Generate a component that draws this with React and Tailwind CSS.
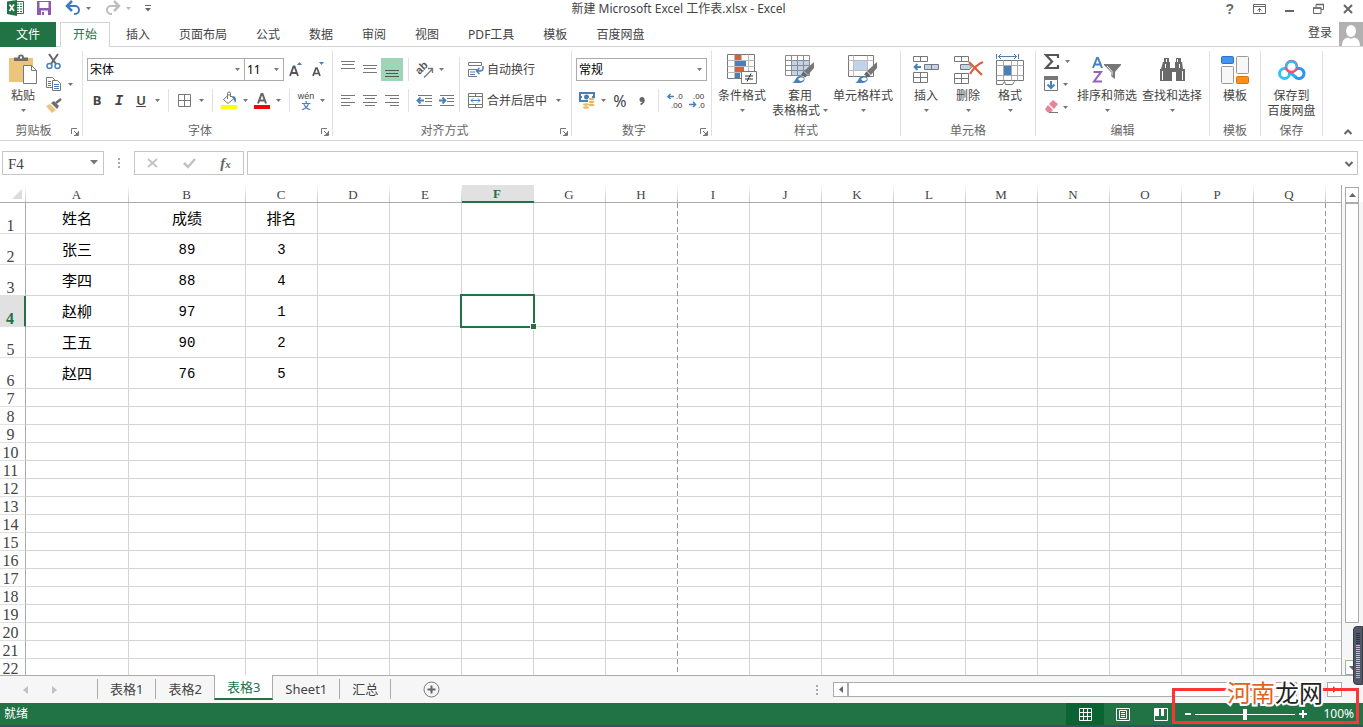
import { useState } from "react";

const COLUMNS = "ABCDEFGHIJKLMNOPQ".split("");

const DATA = [
  ["姓名", "成绩", "排名"],
  ["张三", "89", "3"],
  ["李四", "88", "4"],
  ["赵柳", "97", "1"],
  ["王五", "90", "2"],
  ["赵四", "76", "5"],
];

const ROWS = Array.from({ length: 22 }, (_, i) => i + 1);

const MENU = ["开始", "插入", "页面布局", "公式", "数据", "审阅", "视图", "PDF工具", "模板", "百度网盘"];

const SHEETS = ["表格1", "表格2", "表格3", "Sheet1", "汇总"];

/* ---------- helpers ---------- */

const Svg = ({ w, h, children, className = "" }) => (
  <svg
    width={w}
    height={h}
    viewBox={`0 0 ${w} ${h}`}
    fill="none"
    className={`shrink-0 overflow-visible ${className}`}
    aria-hidden="true"
  >
    {children}
  </svg>
);

const Caret = ({ color = "#777" }) => (
  <Svg w={5} h={3}>
    <path d="M0 0h5L2.500 3z" fill={color} />
  </Svg>
);

const DropButton = ({ label }) => (
  <button aria-label={label} className="flex h-full w-[11px] items-center justify-center">
    <Caret />
  </button>
);

const Tool = ({ label, active, children }) => (
  <button
    aria-label={label}
    className={`flex h-full w-[22px] shrink-0 items-center justify-center ${active ? "bg-[#9fd5b7]" : ""}`}
  >
    {children}
  </button>
);

const Sep = () => (
  <div className="flex h-full w-[11px] justify-center">
    <div className="w-px bg-[#e1e1e1]" />
  </div>
);

const Group = ({ title, launcher, width, children }) => (
  <section className={`flex h-[85px] shrink-0 flex-col border-r border-[#e1e1e1] ${width}`}>
    <div className="flex h-[73px]">{children}</div>
    <div className="flex h-3 items-center leading-[14px] text-[#666]">
      <span className={`flex-1 pt-[2px] text-center ${launcher ? "pr-1" : ""}`}>{title}</span>
      {launcher && (
        <button aria-label={`${title}设置`} className="mr-[3px] pt-1">
          <Svg w={8} h={8}>
            <path d="M.5 6V.5H6M3 3l3 3M7.500 3v4.500H3" stroke="#777" />
            <path d="M7 4v3H4z" fill="#777" />
          </Svg>
        </button>
      )}
    </div>
  </section>
);

const BigButton = ({ icon, lines, width, drop = true }) => (
  <button className={`flex h-full shrink-0 flex-col items-center ${width}`}>
    <span className="flex h-[37px] items-center justify-center">{icon}</span>
    <span className="h-[15px] leading-[15px] whitespace-nowrap">{lines[0]}</span>
    <span className="flex h-[15px] items-center gap-[3px] leading-[15px] whitespace-nowrap">
      {lines[1]}
      {drop && <Caret />}
    </span>
  </button>
);

const Combo = ({ label, value, width }) => (
  <div className={`relative h-[23px] ${width}`}>
    <select
      aria-label={label}
      defaultValue={value}
      className="h-full w-full appearance-none border border-[#ababab] bg-white px-[2px] text-xs text-black outline-none"
    >
      <option>{value}</option>
    </select>
    <span className="pointer-events-none absolute top-[10px] right-[5px]">
      <Caret />
    </span>
  </div>
);

/* ---------- icons ---------- */

const ExcelLogo = () => (
  <Svg w={17} h={16}>
    <path d="M9 1.500h7.500v12H9z" fill="#fff" stroke="#217346" />
    <path d="M10 4h5M10 6.500h5M10 9h5M10 11.500h5" stroke="#217346" />
    <path d="M12.500 3v10" stroke="#fff" />
    <path d="M0 1.500 10 0v16L0 14z" fill="#217346" />
    <path d="M2.500 4.500 7 11M7 4.500 2.500 11" stroke="#fff" strokeWidth="1.700" />
  </Svg>
);

const SaveIcon = () => (
  <Svg w={14} h={14}>
    <path d="M0 0h14v14H0z" fill="#8d5aae" />
    <path d="M2.500 1h9v6h-9zM4 9.500h7V14H4z" fill="#fff" />
    <path d="M5 11h2v3H5z" fill="#8d5aae" />
  </Svg>
);

const UndoIcon = ({ color, flip }) => (
  <Svg w={15} h={14} className={flip ? "-scale-x-100" : ""}>
    <path d="M2 5h7a4 4 0 0 1 0 8H8" stroke={color} strokeWidth="2" />
    <path d="M6 0 1 5l5 5" stroke={color} strokeWidth="2.500" />
  </Svg>
);

const PasteIcon = () => (
  <Svg w={28} h={31}>
    <path d="M0 4h24v24H0z" fill="#ecc57c" />
    <path d="M5 7V3.500h4a3 3 0 0 1 6 0h4V7z" fill="#6d6d6d" />
    <path d="M11 2.500h2v2h-2z" fill="#fff" />
    <path d="M14.500 11.500h8l5 5v13h-13z" fill="#fff" stroke="#777" />
    <path d="M22.500 11.500v5h5" stroke="#777" />
  </Svg>
);

const CutIcon = () => (
  <Svg w={15} h={16}>
    <path d="M3 0l7 10M12 0 5 10" stroke="#666" strokeWidth="2" />
    <circle cx="3.500" cy="12" r="2.500" stroke="#4a80ba" strokeWidth="1.500" />
    <circle cx="11.500" cy="12" r="2.500" stroke="#4a80ba" strokeWidth="1.500" />
  </Svg>
);

const CopyIcon = () => (
  <Svg w={16} h={14}>
    <path d="M.5.500h6l2 2v8h-8z" fill="#fff" stroke="#777" />
    <path d="M2 4.500h3M2 6.500h3M2 8.500h3" stroke="#4a80ba" />
    <path d="M6.500 3.500h5l3 3v7h-8z" fill="#fff" stroke="#777" />
    <path d="M8 7.500h5M8 9.500h5M8 11.500h5" stroke="#4a80ba" />
  </Svg>
);

const FormatPainterIcon = () => (
  <Svg w={16} h={14}>
    <path d="m0 7 4-2 6 6-4 3z" fill="#ecc57c" />
    <path d="m5 4 3-2 5 5-2 3z" fill="#6d6d6d" />
    <path d="m10 4 5-4" stroke="#6d6d6d" strokeWidth="2.500" />
  </Svg>
);

const BordersIcon = () => (
  <Svg w={14} h={13}>
    <path d="M.5.500h12v12H.5zM6.500.500v12M.5 6.500h12" stroke="#777" />
  </Svg>
);

const FillIcon = () => (
  <Svg w={16} h={17}>
    <path d="M2.500 7.500 8 2.500l5 4-6 5z" fill="#fff" stroke="#777" />
    <path d="M6.500 7V1.500a1.500 1.500 0 0 1 3 0V5" stroke="#777" />
    <path d="M11 4c3 0 4.500 2 4 5l-1 2c-1-3-1-4-3-7z" fill="#4a80ba" />
    <path d="M0 13h16v4H0z" fill="#ff0" />
  </Svg>
);

const FontColorIcon = () => (
  <Svg w={16} h={17}>
    <path d="M4 11.500 7.500 2h1L12 11.500M5 8.500h6" stroke="#666" strokeWidth="2" />
    <path d="M0 13h16v4H0z" fill="#f00" />
  </Svg>
);

const Lines = ({ d, color = "#777" }) => (
  <Svg w={14} h={17}>
    <path d={d} stroke={color} />
  </Svg>
);

const OrientationIcon = () => (
  <Svg w={16} h={16}>
    <g transform="rotate(-45 6 8)">
      <text
        x="0"
        y="9"
        fontSize="11"
        fill="#555"
        className="font-['Liberation_Sans',sans-serif] font-bold"
      >
        ab
      </text>
    </g>
    <path d="M7 15.500 15 7.500M11 6.500h4.500V11" stroke="#777" strokeWidth="1.300" />
  </Svg>
);

const IndentIcon = ({ right }) => (
  <Svg w={16} h={11}>
    <path d="M1 .5h14M8 3.500h7M8 6.500h7M1 10.500h14" stroke="#777" />
    {right ? (
      <path d="M0 5.500h6M3.500 2.500l3 3-3 3" stroke="#4a80ba" strokeWidth="1.800" />
    ) : (
      <path d="M1 5.500h6M3.500 2.500l-3 3 3 3" stroke="#4a80ba" strokeWidth="1.800" />
    )}
  </Svg>
);

const WrapIcon = () => (
  <Svg w={16} h={15}>
    <path d="M.5.500h13v3H.5zM9 7.500H.5v7H9" stroke="#777" />
    <path d="M2 10h5M2 12.500h5" stroke="#4a80ba" />
    <path d="M15 4v2.500c0 2-1 2.500-6 2.500M11.500 6l-3 3 3 3" stroke="#4a80ba" strokeWidth="1.500" />
  </Svg>
);

const MergeIcon = () => (
  <Svg w={16} h={15}>
    <path d="M.5.500h14v14H.5zM.5 3.500h14M.5 11.500h14M7.500.500v3M7.500 11.500v3" stroke="#777" />
    <path d="M3 7.500h9M5 5.500l-2 2 2 2M10 5.500l2 2-2 2" stroke="#4a80ba" />
  </Svg>
);

const CurrencyIcon = () => (
  <Svg w={16} h={17}>
    <path d="M1 1h14v8H1z" fill="#fff" stroke="#4a80ba" strokeWidth="2" />
    <circle cx="7.500" cy="5" r="2.500" fill="#4a80ba" />
    <path d="M1 5h2M13 5h2" stroke="#4a80ba" strokeWidth="2" />
    <path d="M9 6h7v8H9z" fill="#fff" />
    <ellipse cx="12.500" cy="7" rx="3" ry="1.300" fill="#e8b864" />
    <ellipse cx="12.500" cy="10" rx="3" ry="1.300" fill="#e8b864" />
    <ellipse cx="12.500" cy="13" rx="3" ry="1.300" fill="#e8b864" />
    <ellipse cx="7" cy="12.500" rx="3" ry="1.300" fill="#e8b864" />
    <ellipse cx="7" cy="15.500" rx="3" ry="1.300" fill="#e8b864" />
  </Svg>
);

const DecimalIcon = ({ less }) => (
  <Svg w={16} h={15} className="font-['Liberation_Sans',sans-serif]">
    <text x={less ? 4 : 9} y="6" fontSize="8" fill="#333">
      {less ? ".00" : ".0"}
    </text>
    <text x={less ? 9 : 4} y="15" fontSize="8" fill="#333">
      {less ? ".0" : ".00"}
    </text>
    {less ? (
      <path d="M0 11.500h6M4 9l2.500 2.500L4 14" stroke="#4a80ba" strokeWidth="1.500" />
    ) : (
      <path d="M1 3.500h6M3.500 1 1 3.500 3.500 6" stroke="#4a80ba" strokeWidth="1.500" />
    )}
  </Svg>
);

const Brush = () => (
  <g transform="translate(7 7)">
    <path d="M22 0v6l-6 7-4-4z" fill="#777" />
    <path d="m11.500 9.500 4 4-2.500 2-4-3z" fill="#666" />
    <path d="M0 21c4-1 3-8 9-7 6 1 4 7-2 7z" fill="#4a80ba" />
    <path d="M6 17c2-2 5-2 6 0-1 2-3 2-4 2z" fill="#fff" />
  </g>
);

const ConditionalIcon = () => (
  <Svg w={30} h={31}>
    <path d="M.5.500h27v24H.5z" fill="#fff" stroke="#777" />
    <path d="M.5 6.500h27M.5 12.500h27M.5 18.500h27M7.500.500v24M14.500.500v24M21.500.500v24" stroke="#bbb" />
    <path d="M8 1h6v5H8zM8 13h9v5H8z" fill="#dc5f3d" />
    <path d="M8 7h11v5H8zM8 19h5v5H8z" fill="#4a80ba" />
    <path d="M14.500 17.500h15v12h-15z" fill="#fff" stroke="#777" />
    <path d="M18 22h8M18 25h8M24 19.500l-4 8" stroke="#333" />
  </Svg>
);

const TableFormatIcon = () => (
  <Svg w={30} h={29}>
    <path d="M.5.500h24v20H.5z" fill="#fff" />
    <path d="M7 6h17v14H7z" fill="#c0d3ea" />
    <path d="M.5.500h24v20H.5zM.5 5.500h24M.5 10.500h24M.5 15.500h24M6.500.500v20M12.500.500v20M18.500.500v20" stroke="#8b8b8b" />
    <Brush />
  </Svg>
);

const CellStyleIcon = () => (
  <Svg w={30} h={29}>
    <path d="M.5.500h25v21H.5z" fill="#fff" stroke="#777" />
    <path d="M.5 5.500h25M.5 15.500h25M5.500.500v21M19.500.500v21" stroke="#bbb" />
    <path d="M6 6h13v9H6z" fill="#c0d3ea" />
    <Brush />
  </Svg>
);

const InsertIcon = () => (
  <Svg w={26} h={28}>
    <path d="M.5.500h14v5H.5zM7.500.500v5M.5 16.500h14v10H.5zM7.500 16.500v10M.5 21.500h14" stroke="#777" />
    <path d="M11.500 8.500h14v5h-14z" fill="#c0d3ea" stroke="#777" />
    <path d="M18.500 8.500v5" stroke="#777" />
    <path d="M2 11h6M4.500 8 1.500 11l3 3" stroke="#4a80ba" strokeWidth="1.800" />
  </Svg>
);

const DeleteIcon = () => (
  <Svg w={28} h={28}>
    <path d="M.5.500h14v5H.5zM7.500.500v5M.5 17.500h14v10H.5zM7.500 17.500v10M.5 22.500h14" stroke="#777" />
    <path d="M6.500 8.500h9l2 2.500-2 2.500h-9z" fill="#c0d3ea" stroke="#777" />
    <path d="m15 6 13 13M29 6c-5 2-10 7-13 12" stroke="#dc5f3d" strokeWidth="2.300" />
  </Svg>
);

const FormatIcon = () => (
  <Svg w={28} h={31}>
    <path d="M.5 0v5M22.500 0v5M2 2.500h19M5 0 2.500 2.500 5 5M18 0l2.500 2.500L18 5" stroke="#4a80ba" />
    <path d="M.5 6.500h27v20H.5z" fill="#fff" stroke="#777" />
    <path d="M.5 11.500h27M.5 21.500h27M7.500 6.500v20M15.500 6.500v20M21.500 6.500v20" stroke="#aaa" />
    <path d="M8 12h7v9H8z" fill="#4a80ba" />
    <path d="M.5 27v3.500h6l2-3 1 3h7l2-3" stroke="#777" />
  </Svg>
);

const SumIcon = () => (
  <Svg w={15} h={15}>
    <path d="M14 4V1H2l6 6.500L2 14h12v-3" stroke="#555" strokeWidth="2.200" />
  </Svg>
);

const FillDownIcon = () => (
  <Svg w={15} h={16}>
    <path d="M.5.500h13v14H.5z" fill="#fff" stroke="#777" />
    <path d="M0 0h14v4H0z" fill="#777" />
    <path d="M7 5v7M3.500 8.500 7 12l3.500-3.500" stroke="#4a80ba" strokeWidth="2" />
  </Svg>
);

const EraserIcon = () => (
  <Svg w={15} h={14}>
    <path d="m5 4 4-4 5 4-4 5z" fill="#e98398" />
    <path d="m4 5 5 5-3 3-3-1-2-3z" fill="#e98398" />
    <path d="M5 12.500h9" stroke="#777" />
  </Svg>
);

const SortIcon = () => (
  <Svg w={30} h={28}>
    <path d="m1 12 4-10h1l4 10M2.500 8.500h6" stroke="#4a80ba" strokeWidth="2" />
    <path d="M1.500 16H9l-7 9.500h8" stroke="#9460b8" strokeWidth="2" />
    <path d="M12 8h17v1l-6 7v7l-4-3v-4l-7-7z" fill="#777" />
    <path d="m15 10 5 5.500v4" stroke="#fff" />
  </Svg>
);

const FindIcon = () => (
  <Svg w={26} h={25}>
    <path d="M5 1h5v4h1v6h5V5h1V1h5v4h1l1 7h2v12h-9v-9h-4v9H1V12h1l2-7h1z" fill="#6a6a6a" />
    <path d="M3.500 14v9M7.500 2v3M18.500 2v3M23.500 14v9M6.500 7v4M20.500 7v4" stroke="#fff" />
  </Svg>
);

const TemplateIcon = () => (
  <Svg w={28} h={28}>
    <rect x=".5" y=".5" width="12" height="7" rx="1" fill="#4195ee" stroke="#2b73c9" />
    <rect x="15.500" y=".5" width="12" height="17" rx="1" fill="#f7f7f7" stroke="#999" />
    <rect x=".5" y="10.500" width="12" height="17" rx="1" fill="#f7f7f7" stroke="#999" />
    <rect x="15.500" y="20.500" width="12" height="7" rx="1" fill="#ff8d1c" stroke="#dd7409" />
  </Svg>
);

const BaiduDiskIcon = () => (
  <Svg w={27} h={22}>
    <circle cx="6.500" cy="14.500" r="5" stroke="#2cc5f5" strokeWidth="3" />
    <path d="M17 17.500a5 5 0 1 0 1-7" stroke="#2b94ee" strokeWidth="3" />
    <path d="m9.500 11 8 7" stroke="#2bb0f0" strokeWidth="3" />
    <circle cx="13.500" cy="7.500" r="5.500" fill="#fff" stroke="#f4506c" strokeWidth="2.500" />
    <path d="M8 8a5.500 5.500 0 0 1 11 0" stroke="#36b9f3" strokeWidth="2.500" />
  </Svg>
);

/* ---------- title bar & menu ---------- */

const TitleBar = () => (
  <header className="grid h-[22px] shrink-0 grid-cols-[1fr_auto_1fr] pr-[6px]">
    <div className="flex h-4 items-center pl-[7px]">
      <ExcelLogo />
      <button aria-label="保存" className="ml-[13px]">
        <SaveIcon />
      </button>
      <button aria-label="撤消" className="ml-[15px]">
        <UndoIcon color="#3f7cbf" />
      </button>
      <span className="ml-[5px]">
        <Caret />
      </span>
      <button aria-label="恢复" className="ml-[14px]">
        <UndoIcon color="#bdbdbd" flip />
      </button>
      <span className="ml-[6px]">
        <Caret color="#bbb" />
      </span>
      <button aria-label="自定义快速访问工具栏" className="ml-[14px]">
        <Svg w={6} h={7}>
          <path d="M0 .5h6" stroke="#666" />
          <path d="M0 3h6L3 6.500z" fill="#666" />
        </Svg>
      </button>
    </div>
    <h1 className="leading-[18px] text-[#444]">新建 Microsoft Excel 工作表.xlsx - Excel</h1>
    <div className="flex h-[17px] items-center justify-end gap-[19px] pr-1">
      <button aria-label="帮助" className="font-['Liberation_Sans',sans-serif] text-sm leading-4 font-bold text-[#666]">
        ?
      </button>
      <button aria-label="功能区显示选项">
        <Svg w={13} h={10}>
          <path d="M.5.500h12v9H.5zM.5 2.500h12M6.500 8V4.500M4.500 6.500l2-2 2 2" stroke="#666" />
        </Svg>
      </button>
      <button aria-label="最小化">
        <Svg w={9} h={10}>
          <path d="M0 7h9" stroke="#666" strokeWidth="2" />
        </Svg>
      </button>
      <button aria-label="还原">
        <Svg w={11} h={10}>
          <path d="M3 3V.500h7.500v5H8" stroke="#666" />
          <path d="M.5 4h7.500v5.500H.5z" stroke="#666" />
          <path d="M0 4h8.500M3 .5h8" stroke="#666" strokeWidth="1.500" />
        </Svg>
      </button>
      <button aria-label="关闭">
        <Svg w={10} h={10}>
          <path d="m1 1 8 8M9 1 1 9" stroke="#666" strokeWidth="2" />
        </Svg>
      </button>
    </div>
  </header>
);

const MenuBar = () => (
  <nav className="flex h-[25px] shrink-0 text-[#444] shadow-[inset_0_-1px_0_#d4d4d4]">
    <button className="w-14 bg-[#217346] text-white">文件</button>
    <div className="ml-1 flex gap-[3px]">
      {MENU.map((item, i) => (
        <button
          key={item}
          className={`border border-b-0 px-3 leading-6 whitespace-nowrap ${
            i === 0 ? "border-[#d4d4d4] bg-white text-[#217346]" : "border-transparent"
          }`}
        >
          {item}
        </button>
      ))}
    </div>
    <div className="ml-auto flex gap-[7px]">
      <a href="#login" className="leading-[22px]">
        登录
      </a>
      <Svg w={24} h={24}>
        <path d="M0 0h24v24H0z" fill="#b1b1b1" />
        <ellipse cx="12" cy="9" rx="5" ry="6" fill="#fff" />
        <path d="M3 24c0-6 3-8 6-8.500 2 1.500 4 1.500 6 0 3 .5 6 2.500 6 8.500z" fill="#fff" />
      </Svg>
    </div>
  </nav>
);

/* ---------- ribbon ---------- */

const Ribbon = () => (
  <div className="flex h-[94px] shrink-0 border-b border-[#d4d4d4] pt-1 text-[#444]">
    <Group title="剪贴板" launcher width="w-[83px]">
      <div className="pl-px">
        <BigButton width="w-11" icon={<PasteIcon />} lines={["粘贴"]} />
      </div>
      <div className="flex flex-col pl-px">
        <div className="flex h-5 pt-[2px]">
          <button aria-label="剪切">
            <CutIcon />
          </button>
        </div>
        <div className="flex h-[26px] items-center gap-[6px]">
          <button aria-label="复制">
            <CopyIcon />
          </button>
          <Caret />
        </div>
        <div className="flex h-[18px] items-center">
          <button aria-label="格式刷">
            <FormatPainterIcon />
          </button>
        </div>
      </div>
    </Group>

    <Group title="字体" launcher width="w-[250px]">
      <div className="flex flex-col gap-2 pt-[7px] pl-[3px]">
        <div className="flex h-[23px] items-center pl-px">
          <Combo label="字体" value="宋体" width="w-[158px]" />
          <Combo label="字号" value="11" width="-ml-px w-10" />
          <Tool label="增大字号">
            <Svg w={12} h={15}>
              <path d="m1 14 3.500-9.500h1L9 14M2.500 11h5" stroke="#555" strokeWidth="1.800" />
              <path d="M8 3h5l-2.500-3z" fill="#4a80ba" />
            </Svg>
          </Tool>
          <Tool label="减小字号">
            <Svg w={10} h={15}>
              <path d="m1 14 3-8h1l3 8M2.500 11.500h4" stroke="#555" strokeWidth="1.700" />
              <path d="M7 0h5L9.500 3z" fill="#4a80ba" />
            </Svg>
          </Tool>
        </div>
        <div className="flex h-[23px] items-center">
          <Tool label="加粗">
            <b className="text-[13px]">B</b>
          </Tool>
          <Tool label="倾斜">
            <i className="font-['Liberation_Mono',monospace] text-sm font-bold">I</i>
          </Tool>
          <Tool label="下划线">
            <u className="text-[13px] font-semibold">U</u>
          </Tool>
          <DropButton label="下划线选项" />
          <Sep />
          <Tool label="边框">
            <BordersIcon />
          </Tool>
          <DropButton label="边框选项" />
          <Sep />
          <Tool label="填充颜色">
            <FillIcon />
          </Tool>
          <DropButton label="填充颜色选项" />
          <Tool label="字体颜色">
            <FontColorIcon />
          </Tool>
          <DropButton label="字体颜色选项" />
          <Sep />
          <Tool label="显示拼音">
            <span className="flex flex-col items-center">
              <span className="font-['Liberation_Sans',sans-serif] text-[9px] leading-[9px]">wén</span>
              <span className="text-[9px] leading-[9px] font-bold text-[#4a80ba]">文</span>
            </span>
          </Tool>
          <DropButton label="拼音选项" />
        </div>
      </div>
    </Group>

    <Group title="对齐方式" launcher width="w-[239px]">
      <div className="flex flex-col gap-2 pt-[7px] pl-1">
        <div className="flex h-[23px]">
          <Tool label="顶端对齐">
            <Lines d="M0 .5h14M1 3.500h12M0 7.500h14" />
          </Tool>
          <Tool label="垂直居中">
            <Lines d="M0 4.500h14M1 7.500h12M0 11.500h14" />
          </Tool>
          <Tool label="底端对齐" active>
            <Lines d="M0 9.500h14M1 12.500h12M0 15.500h14" color="#555" />
          </Tool>
          <Sep />
          <Tool label="方向">
            <OrientationIcon />
          </Tool>
          <DropButton label="方向选项" />
        </div>
        <div className="flex h-[23px]">
          <Tool label="左对齐">
            <Lines d="M0 3.500h14M0 6.500h9M0 10.500h14M0 13.500h9" />
          </Tool>
          <Tool label="居中">
            <Lines d="M0 3.500h14M2 6.500h10M0 10.500h14M2 13.500h10" />
          </Tool>
          <Tool label="右对齐">
            <Lines d="M0 3.500h14M5 6.500h9M0 10.500h14M5 13.500h9" />
          </Tool>
          <Sep />
          <Tool label="减少缩进量">
            <IndentIcon />
          </Tool>
          <Tool label="增加缩进量">
            <IndentIcon right />
          </Tool>
        </div>
      </div>
      <div className="mt-[6px] ml-px h-[55px] w-px bg-[#e1e1e1]" />
      <div className="flex flex-col gap-2 pt-[7px] pl-2">
        <button className="flex h-[23px] items-center gap-[3px]">
          <WrapIcon />
          自动换行
        </button>
        <div className="flex h-[23px] items-center gap-[6px]">
          <button className="flex items-center gap-[3px] whitespace-nowrap">
            <MergeIcon />
            合并后居中
          </button>
          <DropButton label="合并选项" />
        </div>
      </div>
    </Group>

    <Group title="数字" launcher width="w-[140px]">
      <div className="flex flex-col gap-2 pt-[7px] pl-1">
        <Combo label="数字格式" value="常规" width="w-[131px]" />
        <div className="flex h-[23px]">
          <Tool label="会计数字格式">
            <CurrencyIcon />
          </Tool>
          <DropButton label="会计数字格式选项" />
          <Tool label="百分比样式">
            <span className="text-base">%</span>
          </Tool>
          <Tool label="千位分隔样式">
            <Svg w={6} h={8}>
              <circle cx="3" cy="2.500" r="2.500" fill="#666" />
              <path d="M5 3c0 2-1 3.500-3.500 4.500" stroke="#666" strokeWidth="1.500" />
            </Svg>
          </Tool>
          <Sep />
          <Tool label="增加小数位数">
            <DecimalIcon />
          </Tool>
          <Tool label="减少小数位数">
            <DecimalIcon less />
          </Tool>
        </div>
      </div>
    </Group>

    <Group title="样式" width="w-[189px]">
      <BigButton width="w-[60px]" icon={<ConditionalIcon />} lines={["条件格式"]} />
      <BigButton width="w-14" icon={<TableFormatIcon />} lines={["套用", "表格格式"]} />
      <BigButton width="w-[70px]" icon={<CellStyleIcon />} lines={["单元格样式"]} />
    </Group>

    <Group title="单元格" width="w-[135px]">
      <div className="flex pl-1">
        <BigButton width="w-[42px]" icon={<InsertIcon />} lines={["插入"]} />
        <BigButton width="w-[42px]" icon={<DeleteIcon />} lines={["删除"]} />
        <BigButton width="w-[42px]" icon={<FormatIcon />} lines={["格式"]} />
      </div>
    </Group>

    <Group title="编辑" width="w-[174px]">
      <div className="flex w-[38px] flex-col gap-[7px] pt-[2px] pl-2">
        <button aria-label="自动求和" className="flex h-4 items-center gap-[6px]">
          <SumIcon />
          <Caret />
        </button>
        <button aria-label="填充" className="flex h-4 items-center gap-1">
          <FillDownIcon />
          <Caret />
        </button>
        <button aria-label="清除" className="flex h-4 items-center gap-1">
          <EraserIcon />
          <Caret />
        </button>
      </div>
      <BigButton width="w-[66px]" icon={<SortIcon />} lines={["排序和筛选"]} />
      <BigButton width="w-16" icon={<FindIcon />} lines={["查找和选择"]} />
    </Group>

    <Group title="模板" width="w-[51px]">
      <BigButton width="w-full" icon={<TemplateIcon />} lines={["模板"]} drop={false} />
    </Group>

    <Group title="保存" width="w-[62px]">
      <BigButton width="w-full" icon={<BaiduDiskIcon />} lines={["保存到", "百度网盘"]} drop={false} />
    </Group>

    <button aria-label="折叠功能区" className="mt-auto mr-[11px] mb-[5px] ml-auto">
      <Svg w={8} h={6}>
        <path d="m.5 5 3.500-3.500L7.500 5" stroke="#666" strokeWidth="2" />
      </Svg>
    </button>
  </div>
);

/* ---------- formula bar ---------- */

const FormulaBar = () => (
  <div className="flex shrink-0 py-[10px] pr-[5px] pl-[2px]">
    <div className="relative w-[102px]">
      <input
        aria-label="名称框"
        defaultValue="F4"
        className="h-6 w-full border border-[#c6c6c6] px-[5px] pt-[2px] font-['Liberation_Serif',serif] text-[15px] text-[#444] outline-none"
      />
      <span className="pointer-events-none absolute top-[9px] right-[6px]">
        <Svg w={8} h={5}>
          <path d="M0 0h8L4 4.500z" fill="#777" />
        </Svg>
      </span>
    </div>
    <div className="flex w-[30px] items-center justify-center">
      <Svg w={2} h={11}>
        <path d="M0 0h2v2H0zM0 4h2v2H0zM0 8h2v2H0z" fill="#aaa" />
      </Svg>
    </div>
    <div className="flex h-6 w-[110px] items-center justify-around border border-[#c6c6c6]">
      <button aria-label="取消">
        <Svg w={11} h={10}>
          <path d="m1 1 9 8M10 1 1 9" stroke="#c3c3c3" strokeWidth="1.800" />
        </Svg>
      </button>
      <button aria-label="输入">
        <Svg w={13} h={10}>
          <path d="m1 5 4 4 7-8" stroke="#c3c3c3" strokeWidth="2.500" />
        </Svg>
      </button>
      <button
        aria-label="插入函数"
        className="font-['Liberation_Serif',serif] text-[15px] leading-5 font-bold text-[#666] italic"
      >
        f<span className="text-[11px]">x</span>
      </button>
    </div>
    <div className="relative ml-[3px] flex-1">
      <input
        aria-label="编辑栏"
        className="h-6 w-full border border-[#c6c6c6] px-2 outline-none"
      />
      <span className="pointer-events-none absolute top-[10px] right-[5px]">
        <Svg w={8} h={6}>
          <path d="m.5 1 3.500 3.500L7.500 1" stroke="#666" strokeWidth="2" />
        </Svg>
      </span>
    </div>
  </div>
);

/* ---------- grid ---------- */

const Sheet = () => (
  <div className="relative min-w-0 flex-1 overflow-hidden border-r border-[#ababab]">
    <table className="w-full min-w-[1340px] table-fixed border-separate border-spacing-0">
      <colgroup>
        <col className="w-[26px]" />
        <col className="w-[103px]" />
        <col className="w-[117px]" />
        {COLUMNS.slice(2).map((c) => (
          <col key={c} className="w-[72px]" />
        ))}
        <col />
      </colgroup>
      <thead>
        <tr className="h-[18px] font-['Liberation_Serif',serif] text-[13px] leading-[14px] text-[#444]">
          <th
            aria-label="全选"
            className="border-b border-[#ababab] bg-linear-to-b from-white to-[#c6c6c6] bg-[length:1px_100%] bg-right bg-no-repeat p-0"
          >
            <Svg w={10} h={10} className="ml-3">
              <path d="M10 0v10H0z" fill="#dcdcdc" />
            </Svg>
          </th>
          {COLUMNS.map((c) => (
            <th
              key={c}
              className={`p-0 pr-[2px] align-bottom ${
                c === "F"
                  ? "border-b-2 border-[#217346] bg-[#e1e1e1] font-bold text-[#217346]"
                  : "border-b border-[#ababab] bg-linear-to-b from-white to-[#c6c6c6] bg-[length:1px_100%] bg-right bg-no-repeat font-normal"
              }`}
            >
              {c}
            </th>
          ))}
          <th className="border-b border-[#ababab] p-0" />
        </tr>
      </thead>
      <tbody>
        {ROWS.map((r) => (
          <tr key={r} className={r <= 6 ? "h-[31px]" : "h-[18px]"}>
            <th
              className={`border-b p-0 pr-1 align-bottom font-['Liberation_Serif',serif] text-base leading-[14px] ${
                r === 4
                  ? "border-r-2 border-r-[#217346] border-b-[#e1e1e1] bg-[#e1e1e1] font-bold text-[#217346]"
                  : "border-r border-r-[#ababab] border-b-[#e1e1e1] font-normal text-[#444]"
              }`}
            >
              {r}
            </th>
            {COLUMNS.map((c, i) => {
              const value = DATA[r - 1]?.[i] ?? "";
              const isNumber = /^\d+$/.test(value);
              const selected = c === "F" && r === 4;
              return (
                <td
                  key={c}
                  className={`border-b border-[#d4d4d4] p-0 text-center leading-[17px] text-black ${
                    isNumber
                      ? "pt-[2px] font-['Liberation_Mono',monospace] text-sm"
                      : "text-[15px]"
                  } ${c === "H" || c === "Q" ? "" : "border-r"} ${selected ? "relative" : ""}`}
                >
                  {value}
                  {selected && (
                    <div className="absolute -inset-[2px] z-10 border-2 border-[#217346]">
                      <div className="absolute -right-1 -bottom-1 size-[7px] border border-white bg-[#217346]" />
                    </div>
                  )}
                </td>
              );
            })}
            <td className="border-b border-[#d4d4d4] p-0" />
          </tr>
        ))}
      </tbody>
    </table>
    {/* page breaks after H and Q */}
    <div className="absolute top-[18px] bottom-0 left-[677px] w-px bg-[repeating-linear-gradient(to_bottom,#999_0_5px,#fff_5px_8px)]" />
    <div className="absolute top-[18px] bottom-0 left-[1325px] w-px bg-[repeating-linear-gradient(to_bottom,#999_0_5px,#fff_5px_8px)]" />
  </div>
);

const VerticalScroll = () => (
  <div className="flex w-[21px] shrink-0 flex-col bg-[#f6f6f6] pr-1 pl-[3px] shadow-[inset_0_17px_0_#fff]">
    <button
      aria-label="向上滚动"
      className="mt-[2px] flex h-4 shrink-0 items-center justify-center border border-[#ababab] bg-white"
    >
      <Svg w={7} h={4}>
        <path d="M0 4h7L3.500 0z" fill="#666" />
      </Svg>
    </button>
    <div className="-mt-px flex-1 border border-t-2 border-[#ababab] bg-white" />
    <button
      aria-label="向下滚动"
      className="mt-[37px] flex h-[15px] shrink-0 items-center justify-center border border-[#ababab] bg-white"
    >
      <Svg w={7} h={4}>
        <path d="M0 0h7L3.500 4z" fill="#666" />
      </Svg>
    </button>
  </div>
);

const SheetBar = ({ current, onChange }) => (
  <div className="flex h-7 shrink-0 border-t border-[#ababab] bg-[#f6f6f6] text-[13px] text-[#444]">
    <div className="flex w-[97px] items-center gap-6 pl-[23px]">
      <button aria-label="上一个工作表">
        <Svg w={5} h={8}>
          <path d="M5 0v8L0 4z" fill="#c0c0c0" />
        </Svg>
      </button>
      <button aria-label="下一个工作表">
        <Svg w={5} h={8}>
          <path d="M0 0v8l5-4z" fill="#c0c0c0" />
        </Svg>
      </button>
    </div>
    <div className="flex items-start">
      <div className="mt-[3px] h-5 w-px bg-[#ababab]" />
      {SHEETS.map((s) =>
        s === current ? (
          <button
            key={s}
            className="-mt-px -ml-px h-[25px] border-x border-b-2 border-x-[#ababab] border-b-[#217346] bg-white px-3 leading-6 text-[#217346]"
          >
            {s}
          </button>
        ) : (
          <button
            key={s}
            onClick={() => onChange(s)}
            className="mt-[3px] h-5 border-r border-[#ababab] px-3 leading-4"
          >
            {s}
          </button>
        ),
      )}
    </div>
    <button aria-label="新工作表" className="ml-8">
      <Svg w={17} h={17}>
        <circle cx="8.500" cy="8.500" r="7.500" stroke="#777" />
        <path d="M4.500 8.500h8M8.500 4.500v8" stroke="#666" strokeWidth="2" />
      </Svg>
    </button>
    <div className="ml-auto flex items-center">
      <Svg w={2} h={10}>
        <path d="M0 0h2v2H0zM0 4h2v2H0zM0 8h2v2H0z" fill="#aaa" />
      </Svg>
    </div>
    <div className="mt-[6px] mr-[21px] ml-[15px] flex h-[15px] w-[509px] bg-[#f0f0f0]">
      <button
        aria-label="向左滚动"
        className="flex w-[15px] items-center justify-center border border-[#ababab] bg-white"
      >
        <Svg w={4} h={7}>
          <path d="M4 0v7L0 3.500z" fill="#666" />
        </Svg>
      </button>
      <div className="flex-1 border border-[#ababab] bg-white" />
      <button
        aria-label="向右滚动"
        className="ml-[30px] flex w-[15px] items-center justify-center border border-[#ababab] bg-white"
      >
        <Svg w={4} h={7}>
          <path d="M0 0v7l4-3.500z" fill="#666" />
        </Svg>
      </button>
    </div>
  </div>
);

const StatusBar = () => {
  const [zoom, setZoom] = useState(100);

  return (
    <footer className="flex h-6 shrink-0 items-stretch border-b-2 border-[#35506f] bg-[#217346] pr-[9px] pl-1 text-white">
      <span className="leading-[22px]">就绪</span>
      <button aria-label="普通" className="ml-auto flex w-[38px] items-center justify-center bg-[#0a6332]">
        <Svg w={13} h={13}>
          <path d="M.5.500h12v12H.5zM.5 4.500h12M.5 8.500h12M4.500.500v12M8.500.500v12" stroke="#fff" />
        </Svg>
      </button>
      <button aria-label="页面布局视图" className="flex w-[38px] items-center justify-center">
        <Svg w={14} h={13}>
          <path d="M.5.500h13v12H.5zM3.500 2.500h7v8h-7zM5 4.500h4M5 6.500h4M5 8.500h4" stroke="#fff" />
        </Svg>
      </button>
      <button aria-label="分页预览" className="flex w-[38px] items-center justify-center">
        <Svg w={14} h={13}>
          <path d="M.5.500h13v12H.5z" stroke="#fff" />
          <path d="M1 1h4v7H1zM7 1h3v7H7z" fill="#fff" />
        </Svg>
      </button>
      <button aria-label="缩小" className="ml-[5px] flex items-center">
        <Svg w={6} h={2}>
          <path d="M0 0h6v2H0z" fill="#fff" />
        </Svg>
      </button>
      <input
        type="range"
        aria-label="显示比例"
        min="0"
        max="200"
        value={zoom}
        onChange={(e) => setZoom(Number(e.target.value))}
        className="mx-1 w-[100px] appearance-none bg-[linear-gradient(#fff,#fff)] bg-[length:100%_1px] bg-center bg-no-repeat [&::-webkit-slider-thumb]:h-[11px] [&::-webkit-slider-thumb]:w-1 [&::-webkit-slider-thumb]:appearance-none [&::-webkit-slider-thumb]:bg-white"
      />
      <button aria-label="放大" className="flex items-center">
        <Svg w={8} h={8}>
          <path d="M0 3h3V0h2v3h3v2H5v3H3V5H0z" fill="#fff" />
        </Svg>
      </button>
      <span className="w-[47px] text-right leading-[22px]">{zoom}%</span>
    </footer>
  );
};

export default function App() {
  const [sheet, setSheet] = useState("表格3");

  return (
    <div className="relative flex h-screen flex-col overflow-hidden bg-white font-['Noto_Sans','Noto_Sans_CJK_SC',sans-serif] text-xs">
      <TitleBar />
      <MenuBar />
      <Ribbon />
      <FormulaBar />
      <main className="flex min-h-0 flex-1">
        <Sheet />
        <VerticalScroll />
      </main>
      <SheetBar current={sheet} onChange={setSheet} />
      <StatusBar />

      {/* floating desktop gadget */}
      <div className="absolute right-0 bottom-[42px] z-20 flex h-[59px] w-[10px] items-center justify-center rounded-l border border-[#363c48] bg-[#515867]">
        <div className="flex h-[46px] w-1 flex-col">
          <div className="h-3 bg-[repeating-linear-gradient(to_bottom,#2d323c_0_1px,#515867_1px_2px)]" />
          <div className="h-3 bg-[repeating-linear-gradient(to_bottom,#e8c35a_0_1px,#515867_1px_2px)]" />
          <div className="h-3 bg-[repeating-linear-gradient(to_bottom,#b7dc84_0_1px,#515867_1px_2px)]" />
          <div className="flex-1 bg-[repeating-linear-gradient(to_bottom,#62e0c0_0_1px,#515867_1px_2px)]" />
        </div>
      </div>

      {/* zoom highlight and watermark */}
      <div className="pointer-events-none absolute right-1 bottom-[3px] z-20 h-9 w-[187px] border-3 border-[#ff3535]" />
      <div className="pointer-events-none absolute right-10 bottom-5 z-30 text-2xl leading-7 text-[#222] [paint-order:stroke_fill] [-webkit-text-stroke:4px_#fff]">
        <span className="text-[#e0641c]">河南</span>龙网
      </div>
    </div>
  );
}
